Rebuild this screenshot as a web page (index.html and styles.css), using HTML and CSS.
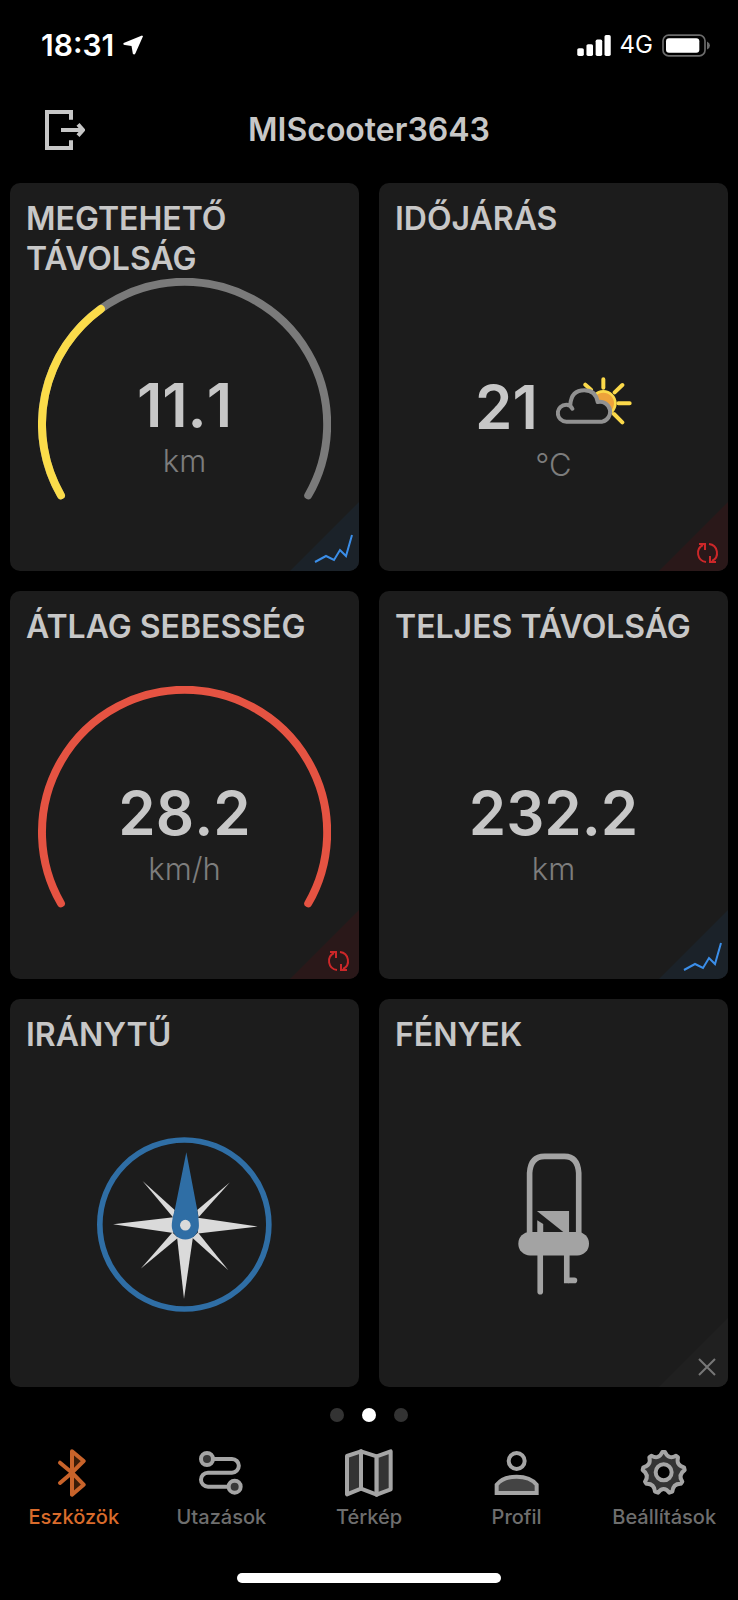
FILE: index.html
```html
<!DOCTYPE html>
<html lang="hu">
<head>
    <meta charset="UTF-8">
    <meta name="viewport" content="width=device-width, initial-scale=1.0">
    <title>MIScooter3643</title>
    <link rel="stylesheet" href="styles.css">
</head>
<body>

    <!-- Status bar -->
    <div class="status-bar">
        <div class="status-group">
            <span class="clock">18:31</span>
            <svg class="location-icon" viewBox="278 46 61 60" aria-hidden="true">
                <path d="M336 47 L280 70 Q277 76 284 76 L304 79 L308 103 Q313 107 316 101 L339 49 Z" fill="#fff"/>
            </svg>
        </div>
        <div class="status-group status-right">
            <svg class="signal-icon" viewBox="54 44 102 64" aria-hidden="true" fill="#fff">
                <rect x="54" y="84" width="20" height="24" rx="5"/>
                <rect x="82" y="72" width="20" height="36" rx="5"/>
                <rect x="110" y="58" width="20" height="50" rx="5"/>
                <rect x="137" y="44" width="19" height="64" rx="5"/>
            </svg>
            <span class="network">4G</span>
            <svg class="battery-icon" viewBox="305 42 144 68" aria-hidden="true">
                <rect x="308" y="45" width="126" height="62" rx="17" fill="none" stroke="#6b6b6b" stroke-width="5"/>
                <rect x="317" y="54" width="100" height="44" rx="9" fill="#fff"/>
                <path d="M440 64 Q449 68 449 76 Q449 84 440 88 Z" fill="#6b6b6b"/>
            </svg>
        </div>
    </div>

    <!-- Header -->
    <header class="header">
        <button class="exit-button" type="button" aria-label="Kilépés">
            <svg viewBox="45 270 120 120" fill="none" stroke="#c7c7c7" stroke-width="12">
                <path d="M123 299 V276 H51 V384 H123 V361"/>
                <path d="M93 330 H158 M144 313 L159 330 L144 347"/>
            </svg>
        </button>
        <h1>MIScooter3643</h1>
    </header>

    <!-- Dashboard cards -->
    <main class="cards">
        <section class="card">
            <h2>MEGTEHETŐ TÁVOLSÁG</h2>
            <div class="card-body">
                <svg class="gauge" viewBox="0 0 294 294" aria-hidden="true">
                    <path class="gauge-track" d="M23 218 A143 143 0 1 1 271 218"/>
                    <path class="gauge-value yellow" pathLength="100" stroke-dasharray="35 100" d="M23 218 A143 143 0 1 1 271 218"/>
                </svg>
                <div class="readout">
                    <div class="value">11.1</div>
                    <div class="unit">km</div>
                </div>
            </div>
            <button class="corner blue" type="button" aria-label="Grafikon">
                <svg viewBox="0 0 69 69">
                    <path class="corner-bg" d="M69 0 V69 H0 Z"/>
                    <path d="M25 60 L36 54 L44 58 L50 48 L56 54 L62 33"/>
                </svg>
            </button>
        </section>

        <section class="card">
            <h2>IDŐJÁRÁS</h2>
            <div class="card-body">
                <div class="readout weather">
                    <div class="value">21
                        <svg class="weather-icon" viewBox="45 24 228 144" aria-hidden="true">
                            <g fill="none" stroke="#fbd94a" stroke-width="12" stroke-linecap="round">
                                <circle cx="187" cy="103" r="36" fill="#eda33b" stroke-width="8"/>
                                <path d="M187 31 V56 M244 48 L221 70 M232 103 H266 M219 135 L244 160 M133 47 L150 62"/>
                            </g>
                            <path fill="#1c1c1c" d="M76 158 A26 26 0 0 1 76 106 Q83 106 88 108 A41 41 0 0 1 169 100 A30 30 0 0 1 184 158 Z"/>
                            <path fill="none" stroke="#919191" stroke-width="12" stroke-linecap="round" stroke-linejoin="round" d="M94 119 Q89 107 76 107 A25 25 0 0 0 76 158 H184 A30 30 0 0 0 170 99 M88 107 Q91 64 130 64 Q164 64 170 99"/>
                        </svg>
                    </div>
                    <div class="unit">°C</div>
                </div>
            </div>
            <button class="corner red" type="button" aria-label="Frissítés">
                <svg viewBox="0 0 69 69">
                    <path class="corner-bg" d="M69 0 V69 H0 Z"/>
                    <path d="M47 60 A9 9 0 0 1 44 43 M40 42 H46 V48 M50 42 A9 9 0 0 1 53 59 M57 60 H51 V54"/>
                </svg>
            </button>
        </section>

        <section class="card">
            <h2>ÁTLAG SEBESSÉG</h2>
            <div class="card-body">
                <svg class="gauge" viewBox="0 0 294 294" aria-hidden="true">
                    <path class="gauge-value red" d="M23 218 A143 143 0 1 1 271 218"/>
                </svg>
                <div class="readout">
                    <div class="value">28.2</div>
                    <div class="unit">km/h</div>
                </div>
            </div>
            <button class="corner red" type="button" aria-label="Frissítés">
                <svg viewBox="0 0 69 69">
                    <path class="corner-bg" d="M69 0 V69 H0 Z"/>
                    <path d="M47 60 A9 9 0 0 1 44 43 M40 42 H46 V48 M50 42 A9 9 0 0 1 53 59 M57 60 H51 V54"/>
                </svg>
            </button>
        </section>

        <section class="card">
            <h2>TELJES TÁVOLSÁG</h2>
            <div class="card-body">
                <div class="readout">
                    <div class="value">232.2</div>
                    <div class="unit">km</div>
                </div>
            </div>
            <button class="corner blue" type="button" aria-label="Grafikon">
                <svg viewBox="0 0 69 69">
                    <path class="corner-bg" d="M69 0 V69 H0 Z"/>
                    <path d="M25 60 L36 54 L44 58 L50 48 L56 54 L62 33"/>
                </svg>
            </button>
        </section>

        <section class="card">
            <h2>IRÁNYTŰ</h2>
            <div class="card-body picture">
                <svg class="compass" viewBox="290 420 527 528" aria-hidden="true">
                    <circle cx="553" cy="684" r="255" fill="none" stroke="#2f6ea5" stroke-width="17"/>
                    <g fill="#dadada">
                        <path d="M338 683 L520 662 V710 Z"/>
                        <path d="M774 690 L594 664 V711 Z"/>
                        <path d="M552 908 L531 722 H579 Z"/>
                        <path d="M427 553 L524 640 L520 664 Z"/>
                        <path d="M690 557 L592 640 L596 662 Z"/>
                        <path d="M422 817 L517 708 L534 724 Z"/>
                        <path d="M686 822 L577 724 L594 708 Z"/>
                    </g>
                    <path fill="#2f6ea5" d="M559 466 L524 640 Q515 670 515 688 A41 41 0 0 0 597 688 Q597 670 592 640 Z"/>
                    <circle cx="556" cy="686" r="16" fill="#dadada"/>
                </svg>
            </div>
        </section>

        <section class="card">
            <h2>FÉNYEK</h2>
            <div class="card-body picture">
                <svg class="led" viewBox="110 74 214 428" aria-hidden="true">
                    <g fill="none" stroke="#a3a3a3" stroke-width="17">
                        <path d="M145 330 V134 Q148 84 190 84 H250 Q290 84 293 134 V330"/>
                        <path d="M177 370 V492" stroke-linecap="round"/>
                        <path d="M257 370 V458 H264"/>
                        <path d="M266 458 H280" stroke-linecap="round"/>
                    </g>
                    <g fill="#a3a3a3">
                        <rect x="111" y="312" width="213" height="71" rx="35"/>
                        <path d="M167 249 H264 V320 H256 Z"/>
                        <path d="M168 277 L186 288 V320 H168 Z"/>
                    </g>
                </svg>
            </div>
            <button class="corner grey" type="button" aria-label="Bezárás">
                <svg viewBox="0 0 69 69">
                    <path class="corner-bg" d="M69 0 V69 H0 Z"/>
                    <path d="M40 41 L56 57 M56 41 L40 57"/>
                </svg>
            </button>
        </section>
    </main>

    <!-- Page dots -->
    <div class="pager">
        <span class="dot"></span>
        <span class="dot active"></span>
        <span class="dot"></span>
    </div>

    <!-- Tab bar -->
    <nav class="tabs">
        <a class="tab active" href="#eszkozok">
            <svg viewBox="149 180 144 144" fill="none" stroke="#c8632a" stroke-width="12" stroke-linecap="round" stroke-linejoin="round">
                <path fill="#3a1c08" d="M215 187 L250 216 L215 251 Z M215 251 L250 287 L215 317 Z"/>
                <path d="M179 221 L215 251 L179 282"/>
            </svg>
            <span>Eszközök</span>
        </a>
        <a class="tab" href="#utazasok">
            <svg viewBox="592 180 144 144" fill="none" stroke="#a5a5a5" stroke-width="12">
                <path d="M640 210 H697 A20 20 0 0 1 697 251 H625 A20 20 0 0 0 625 293 H687"/>
                <circle cx="622" cy="210" r="18" fill="#383838"/>
                <circle cx="705" cy="293" r="18" fill="#383838"/>
            </svg>
            <span>Utazások</span>
        </a>
        <a class="tab" href="#terkep">
            <svg viewBox="1035 180 144 144" fill="none" stroke="#a5a5a5" stroke-width="12" stroke-linejoin="round">
                <path fill="#333" d="M1041 201 L1083 187 V299 L1041 316 Z"/>
                <path d="M1083 187 L1130 202 V317 L1083 299 Z"/>
                <path fill="#333" d="M1130 202 L1172 187 V301 L1130 317 Z"/>
            </svg>
            <span>Térkép</span>
        </a>
        <a class="tab" href="#profil">
            <svg viewBox="374 180 144 144" fill="none" stroke="#a5a5a5" stroke-width="12">
                <circle cx="445" cy="216" r="24"/>
                <path fill="#444" d="M385 312 V287 Q404 263 445 263 Q486 263 505 287 V312 Z"/>
            </svg>
            <span>Profil</span>
        </a>
        <a class="tab" href="#beallitasok">
            <svg viewBox="817 180 144 144" fill="none" stroke="#a5a5a5" stroke-width="12" stroke-linejoin="round">
                <path fill="#333" d="M884 189 H892 Q903 213 925 200 L931 205 Q925 229 949 235 L951 243 Q930 258 944 278 L940 284 Q916 283 914 308 L905 311 Q888 289 871 311 L862 308 Q860 283 836 284 L832 278 Q846 258 825 243 L827 235 Q851 229 845 205 L851 200 Q873 213 884 189 Z"/>
                <circle cx="888" cy="250" r="24" fill="#000"/>
            </svg>
            <span>Beállítások</span>
        </a>
    </nav>

    <div class="home-indicator"></div>

</body>
</html>
```
FILE: styles.css
```css
* {
    box-sizing: border-box;
}

body {
    margin: 0;
    background-color: #000;
    color: #c7c7c7;
    font-family: Inter, "Liberation Sans", sans-serif;
}

button {
    padding: 0;
    border: none;
    background: none;
    cursor: pointer;
}

svg {
    display: block;
}

/* Status bar */
.status-bar {
    display: flex;
    align-items: center;
    justify-content: space-between;
    height: 90px;
    padding: 0 28px 0 41px;
    color: #fff;
}

.status-group {
    display: flex;
    align-items: center;
    gap: 9px;
}

.clock {
    font-size: 30px;
    font-weight: 600;
    line-height: 40px;
}

.network {
    font-size: 24px;
    line-height: 40px;
}

.location-icon {
    width: 20px;
    height: 20px;
}

.signal-icon {
    width: 34px;
    height: 21px;
}

.battery-icon {
    width: 48px;
    height: 23px;
}

/* Header */
.header {
    display: grid;
    grid-template-columns: 40px 1fr 40px;
    align-items: center;
    height: 80px;
    padding: 0 45px;
    margin-bottom: 13px;
}

.header h1 {
    margin: 0;
    font-size: 32px;
    font-weight: 600;
    line-height: 40px;
    text-align: center;
}

.exit-button svg {
    width: 40px;
    height: 40px;
}

/* Cards */
.cards {
    display: grid;
    grid-template-columns: 1fr 1fr;
    grid-auto-rows: 1fr;
    gap: 20px;
    padding: 0 10px;
}

.card {
    position: relative;
    display: flex;
    flex-direction: column;
    padding-top: 16px;
    border-radius: 10px;
    background-color: #1c1c1c;
    overflow: hidden;
}

.card h2 {
    min-height: 80px;
    margin: 0;
    padding: 0 16px;
    font-size: 32px;
    font-weight: 600;
    line-height: 40px;
}

.card-body {
    display: grid;
    flex: 1;
    place-items: center;
}

/* gauge and readout share one cell */
.card-body > * {
    grid-area: 1 / 1;
}

.card-body.picture {
    padding-bottom: 34px;
}

.gauge {
    width: 84%;
    margin-top: -1px;
    fill: none;
    stroke-width: 8px;
    stroke-linecap: round;
}

.gauge-track {
    stroke: #7a7a7a;
}

.gauge-value.yellow {
    stroke: #fbdc4a;
}

.gauge-value.red {
    stroke: #e55342;
}

.readout {
    text-align: center;
}

.value {
    display: flex;
    align-items: center;
    justify-content: center;
    gap: 18px;
    font-size: 60px;
    font-weight: 600;
    font-kerning: none;
    line-height: 72px;
}

.unit {
    color: #7d7d7d;
    font-size: 31px;
    font-weight: 300;
    line-height: 40px;
}

.readout.weather {
    display: grid;
    gap: 2px;
    padding-top: 6px;
}

.weather-icon {
    width: 76px;
    height: 48px;
    margin-bottom: 12px;
}

.compass {
    width: 175px;
    height: 175px;
}

.led {
    width: 71px;
    height: 142px;
}

/* Corner buttons */
.corner {
    position: absolute;
    right: 0;
    bottom: 0;
}

.corner svg {
    width: 69px;
    height: 69px;
    fill: none;
    stroke-width: 2px;
}

.corner .corner-bg {
    stroke: none;
}

.corner.blue {
    stroke: #3b8ee8;
}

.corner.blue .corner-bg {
    fill: #1b2229;
}

.corner.red {
    stroke: #cc2729;
}

.corner.red .corner-bg {
    fill: #2a1819;
}

.corner.grey {
    stroke: #777;
}

.corner.grey .corner-bg {
    fill: #202020;
}

/* Page dots */
.pager {
    display: flex;
    justify-content: center;
    gap: 18px;
    padding: 21px 0 27px;
}

.dot {
    width: 14px;
    height: 14px;
    border-radius: 50%;
    background-color: #333;
}

.dot.active {
    background-color: #fff;
}

/* Tab bar */
.tabs {
    display: grid;
    grid-template-columns: repeat(5, 1fr);
}

.tab {
    display: flex;
    flex-direction: column;
    align-items: center;
    gap: 8px;
    color: #6e6e6e;
    font-size: 20px;
    font-weight: 500;
    line-height: 24px;
    text-decoration: none;
}

.tab.active {
    color: #d96b2b;
}

.tab svg {
    width: 48px;
    height: 48px;
}

.home-indicator {
    width: 264px;
    height: 10px;
    margin: 44px auto 16px;
    border-radius: 5px;
    background-color: #fff;
}
```
